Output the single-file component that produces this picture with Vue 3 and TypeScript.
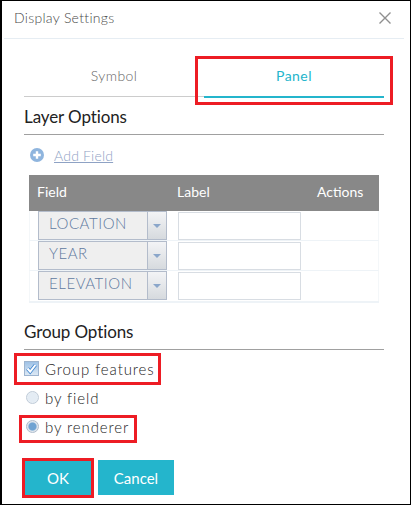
<script setup lang="ts">
interface FieldRow {
  name: string;
}

const rows: FieldRow[] = [{ name: 'LOCATION' }, { name: 'YEAR' }, { name: 'ELEVATION' }];
</script>

<template>
  <div class="dialog">
    <header class="title-bar">
      <span class="title">Display Settings</span>
      <svg class="close" width="12" height="12" viewBox="0 0 12 12" aria-hidden="true">
        <path d="M0.5 0.5L11.5 11.5M11.5 0.5L0.5 11.5" stroke="#8f8f8f" stroke-width="1.4" fill="none" />
      </svg>
    </header>

    <div class="body">
      <div class="tabs">
        <div class="tab">Symbol</div>
        <div class="tab active">Panel</div>
      </div>

      <h3 class="section first">Layer Options</h3>

      <div class="add-field">
        <svg width="14" height="14" viewBox="0 0 14 14" aria-hidden="true">
          <circle cx="7" cy="7" r="7" fill="#8fb5de" />
          <path d="M3.2 7H10.8M7 3.2V10.8" stroke="#fff" stroke-width="2.4" fill="none" />
        </svg>
        <a class="add-link">Add Field</a>
      </div>

      <div class="table">
        <div class="table-head">
          <span>Field</span>
          <span>Label</span>
          <span>Actions</span>
        </div>
        <div v-for="row in rows" :key="row.name" class="table-row">
          <div class="select">
            <span class="select-text">{{ row.name }}</span>
            <span class="select-btn"><i class="caret"></i></span>
          </div>
          <input class="label-input" type="text" />
        </div>
      </div>

      <h3 class="section second">Group Options</h3>

      <div class="options">
        <label class="option">
          <span class="checkbox">
            <svg width="13" height="13" viewBox="0 0 13 13" aria-hidden="true">
              <path d="M2.5 6.5L5.2 9.6L10.4 3" stroke="#3f86d0" stroke-width="3.6" fill="none" />
              <path d="M2.5 6.5L5.2 9.6L10.4 3" stroke="#fff" stroke-width="2" fill="none" />
            </svg>
          </span>
          Group features
        </label>
        <label class="option"><span class="radio"></span>by field</label>
        <label class="option"><span class="radio on"></span>by renderer</label>
      </div>

      <div class="actions">
        <button class="btn ok">OK</button>
        <button class="btn cancel">Cancel</button>
      </div>
    </div>

    <!-- red callouts drawn over the screenshot -->
    <i class="mark mark-tab"></i>
    <i class="mark mark-group"></i>
    <i class="mark mark-renderer"></i>
    <i class="mark mark-ok"></i>
  </div>
</template>

<style>
html,
body {
  margin: 0;
  background: #fff;
}
</style>

<style scoped>
.dialog {
  position: relative;
  box-sizing: border-box;
  width: 411px;
  height: 505px;
  border: 1px solid #000;
  border-width: 1px 1px 1px 2px;
  background: #fff;
  font-family: Lato, "Open Sans", sans-serif;
  font-weight: 300;
  color: #333;
  overflow: hidden;
}
.title-bar {
  display: flex;
  align-items: center;
  justify-content: space-between;
  box-sizing: border-box;
  height: 38px;
  margin: 0 6px 0 2px;
  padding: 0 13px 4px 10px;
  border-bottom: 1px solid #e6edf3;
}
.title {
  font-size: 14px;
  color: #4a4a4a;
  letter-spacing: 0.3px;
}
.body {
  padding: 0 26px 0 22px;
}
.tabs {
  display: flex;
  height: 57px;
  border-bottom: 1px solid #ccc;
}
.tab {
  flex: 1;
  padding-top: 27px;
  box-sizing: border-box;
  text-align: center;
  font-size: 14px;
  line-height: 20px;
  color: #666;
  letter-spacing: 0.45px;
}
.tab.active {
  color: #24b5cc;
  font-weight: 400;
  height: 59px;
  border-bottom: 2px solid #24b5cc;
}
.section {
  margin: 0;
  font-size: 17px;
  font-weight: 400;
  line-height: 24px;
  color: #222;
  border-bottom: 1px solid #a0a0a0;
  letter-spacing: -0.1px;
}
.section.first {
  margin-top: 8px;
  padding-bottom: 5px;
}
.section.second {
  margin-top: 17px;
  padding-bottom: 5px;
}
.add-field {
  display: flex;
  align-items: center;
  gap: 10px;
  height: 14px;
  margin: 13px 0 0 6px;
}
.add-link {
  font-size: 14px;
  color: #8ea2c4;
  text-decoration: underline;
  letter-spacing: 0.2px;
}
.table {
  margin: 13px 5px 0;
  border-bottom: 2px solid #eef3f7;
}
.table-head {
  display: grid;
  grid-template-columns: 140px 140px 1fr;
  align-items: center;
  box-sizing: border-box;
  height: 36px;
  padding: 0 0 4px 8px;
  background: #888;
  color: #fff;
  font-size: 14px;
  font-weight: 400;
}
.table-row {
  display: flex;
  align-items: flex-start;
  gap: 11px;
  box-sizing: border-box;
  height: 30px;
  padding-left: 8px;
  border-bottom: 1px solid #eef3f7;
  border-left: 1px solid #f4f7f9;
  border-right: 1px solid #f4f7f9;
}
.table-row:last-child {
  border-bottom: none;
}
.select {
  display: flex;
  box-sizing: border-box;
  width: 129px;
  height: 29px;
  border: 1px solid #b3bccb;
  background: #efefef;
}
.select-text {
  flex: 1;
  padding-left: 10px;
  font-size: 15px;
  line-height: 22px;
  color: #5f7aa0;
  letter-spacing: 0.55px;
}
.select-btn {
  display: flex;
  align-items: center;
  justify-content: center;
  width: 18px;
  border-left: 1px solid #b3bccb;
  background: linear-gradient(#f3f4f6, #d6dade);
}
.caret {
  border-style: solid;
  border-width: 4px 4px 0;
  border-color: #8aa6ca transparent transparent;
}
.label-input {
  box-sizing: border-box;
  width: 123px;
  height: 28px;
  margin: 1px 0 0;
  padding: 0;
  border: 1px solid #d8dde3;
  background: #fff;
  outline: none;
}
.options {
  margin-top: 4px;
}
.option {
  display: flex;
  align-items: center;
  gap: 6px;
  height: 29px;
  font-size: 15px;
  color: #222;
  letter-spacing: 0.9px;
}
.checkbox {
  display: flex;
  align-items: center;
  justify-content: center;
  box-sizing: border-box;
  width: 15px;
  height: 15px;
  border: 1px solid #9db4cf;
  background: linear-gradient(#9fc2e6, #dce8f4);
}
.radio {
  box-sizing: border-box;
  width: 13px;
  height: 13px;
  margin-left: 2px;
  border: 1px solid #bfcbd8;
  border-radius: 50%;
  background: radial-gradient(circle, #e4ecf4 0 55%, #f4f6f8 100%);
}
.radio.on {
  border-color: #aebccb;
  background: radial-gradient(circle, #6fa3d2 0 45%, #e0e7ee 60%);
}
.actions {
  display: flex;
  gap: 6px;
  margin-top: 19px;
}
.btn {
  height: 35px;
  padding: 0;
  border: none;
  background: #24b5cc;
  color: #fff;
  font: inherit;
  font-weight: 400;
  font-size: 15px;
}
.ok {
  width: 68px;
}
.cancel {
  width: 76px;
}
.mark {
  position: absolute;
  box-sizing: border-box;
  border: 3px solid #ed1c24;
  pointer-events: none;
}
.mark-tab {
  left: 193px;
  top: 55px;
  width: 198px;
  height: 49px;
}
.mark-group {
  left: 12px;
  top: 352px;
  width: 147px;
  height: 32px;
}
.mark-renderer {
  left: 17px;
  top: 414px;
  width: 118px;
  height: 28px;
}
.mark-ok {
  left: 20px;
  top: 457px;
  width: 72px;
  height: 40px;
}
</style>
